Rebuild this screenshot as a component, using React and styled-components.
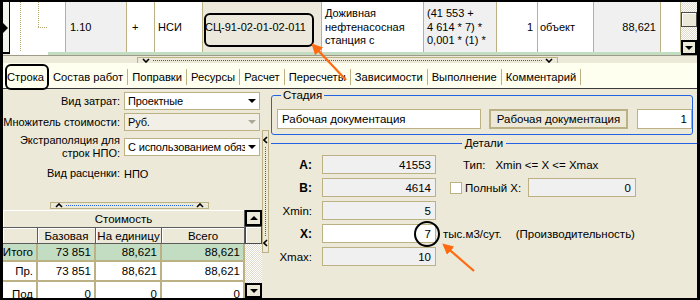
import React from "react";
import styled, { createGlobalStyle } from "styled-components";

const OLIVE = "#bcb185";
const BEIGE = "#ece9d8";
const BLUE = "#2462e4";
const ORANGE = "#ff6a10";
const GREEN = "#c2ddc2";

const GlobalStyle = createGlobalStyle`
  body { margin: 0; background: #fff; }
  * { box-sizing: border-box; }
`;

const Frame = styled.div`
  position: relative;
  width: 700px;
  height: 300px;
  border: 2px solid #000;
  border-left-width: 3px;
  border-right-width: 3px;
  background: ${BEIGE};
  font-family: "Liberation Sans", Arial, sans-serif;
  font-size: 11px;
  color: #000;
  display: flex;
  flex-direction: column;
  overflow: hidden;
`;

/* ---------- top grid ---------- */

const GridArea = styled.div`
  display: flex;
  height: 54px;
  border-bottom: 1px solid #9d9a8a;
`;

const GridRows = styled.div`
  flex: 1;
  display: flex;
  flex-direction: column;
`;

const Row = styled.div`
  display: grid;
  grid-template-columns: 7px 56px 61px 28px 48px 119px 102px 73px 41px 56px 67px 20px;
  height: 50px;
`;

const Cell = styled.div`
  display: flex;
  align-items: center;
  justify-content: ${p => (p.$right ? "flex-end" : "flex-start")};
  padding: 0 ${p => (p.$right ? 4 : 2)}px 0 ${p => (p.$pl ?? 3)}px;
  background: ${p => p.$bg || "#fff"};
  border-right: 1px solid ${OLIVE};
  border-bottom: 1px solid ${OLIVE};
  white-space: pre-line;
  line-height: 13.5px;
  overflow: hidden;
`;

const Indicator = styled.div`
  display: flex;
  align-items: center;
  background: #f3f3ee;
  border-right: 1px solid #000;
  border-bottom: 1px solid #000;
  &::after {
    content: "";
    border-left: 5px solid #000;
    border-top: 5px solid transparent;
    border-bottom: 5px solid transparent;
    margin-top: 1px;
  }
`;

const TreeCell = styled.div`
  background: #fff;
  border-right: 1px solid ${OLIVE};
  border-bottom: 1px solid ${OLIVE};
`;

const RowTail = styled.div`
  display: grid;
  grid-template-columns: 7px 38px 1fr;
  height: 3px;
  & > :nth-child(1) { background: #000; height: 1px; }
  & > :nth-child(2) { background: #fff; }
  & > :nth-child(3) { background: ${GREEN}; }
`;

const ScrollBar = styled.div`
  width: ${p => p.$w}px;
  display: flex;
  flex-direction: column;
  background-color: #f4f3ee;
  background-image: repeating-conic-gradient(#ffffff 0 25%, #dedbcc 0 50%);
  background-size: 2px 2px;
`;

const Thumb = styled.div`
  height: ${p => p.$h}px;
  margin-top: ${p => p.$mt || 0}px;
  background: ${BEIGE};
  border: 1px solid #4a4a4a;
  box-shadow: inset 1px 1px 0 #fff;
`;

const ScrollButton = styled.div`
  height: ${p => p.$h}px;
  margin-top: ${p => (p.$push ? "auto" : "0")};
  background: ${BEIGE};
  border: 2px solid #000;
  display: flex;
  align-items: center;
  justify-content: center;
  &::after {
    content: "";
    border-left: 4px solid transparent;
    border-right: 4px solid transparent;
    ${p => (p.$dir === "up" ? "border-bottom" : "border-top")}: 4px solid #000;
  }
`;

/* ---------- splitters ---------- */

const SplitZone = styled.div`
  height: 7px;
  padding-left: ${p => p.$pl}px;
  margin-top: ${p => p.$mt || 0}px;
  display: flex;
`;

const HSplit = styled.div`
  width: ${p => p.$w}px;
  height: 7px;
  margin-top: ${p => p.$mt || 0}px;
  border: 1px solid ${OLIVE};
  background: ${BEIGE};
  display: flex;
  align-items: center;
  gap: 3px;
  padding: 0 4px;
`;

const VSplit = styled.div`
  width: 7px;
  height: 123px;
  margin-top: 41px;
  border: 1px solid ${OLIVE};
  background: ${BEIGE};
  display: flex;
  flex-direction: column;
  align-items: center;
  gap: 3px;
  padding: 5px 0;
`;

const DotLine = styled.div`
  flex: 1;
  ${p => (p.$vertical ? "border-left" : "border-top")}: 1px dotted ${BLUE};
`;

const Chevron = ({ dir }) => {
  const vert = dir === "left";
  const w = vert ? 5 : 8;
  const h = vert ? 8 : 5;
  const pts = {
    down: "1,1 4,4 7,1",
    up: "1,4 4,1 7,4",
    left: "4,1 1,4 4,7",
  }[dir];
  return (
    <svg width={w} height={h} viewBox={`0 0 ${w} ${h}`} style={{ flex: "none" }}>
      <polyline points={pts} fill="none" stroke="#000" strokeWidth="1.6" />
    </svg>
  );
};

/* ---------- tabs ---------- */

const TabBar = styled.div`
  height: 26px;
  background: #fffff0;
  border-bottom: 1px solid #3a3a3a;
  display: flex;
  align-items: center;
  padding-top: 2px;
`;

const Tab = styled.div`
  padding: 0 4px;
  line-height: 16px;
  font-size: 11.2px;
  border-right: 1px solid ${OLIVE};
  white-space: nowrap;
`;

/* ---------- body ---------- */

const Body = styled.div`
  flex: 1;
  display: flex;
  min-height: 0;
`;

const LeftPanel = styled.div`
  width: 259px;
  display: flex;
  flex-direction: column;
  padding-top: 3px;
`;

const SplitColumn = styled.div`
  width: 8px;
  display: flex;
  justify-content: flex-start;
`;

const RightPanel = styled.div`
  flex: 1;
  padding-left: 1px;
  display: flex;
  flex-direction: column;
`;

const FormRow = styled.div`
  display: grid;
  grid-template-columns: 117px 136px;
  column-gap: 4px;
  align-items: center;
  height: ${p => p.$h}px;
  margin-top: ${p => p.$mt || 0}px;
`;

const FormLabel = styled.div`
  text-align: right;
  line-height: 13px;
`;

const Select = styled.div`
  height: 18px;
  border: 1px solid ${OLIVE};
  background: ${p => (p.$disabled ? "#f1efe6" : "#fff")};
  display: flex;
  align-items: center;
  padding-left: 3px;
  white-space: nowrap;
  overflow: hidden;
`;

const SelectText = styled.span`
  flex: 1;
  overflow: hidden;
  letter-spacing: -0.15px;
`;

const SelectArrow = styled.div`
  width: 14px;
  height: 100%;
  flex: none;
  display: flex;
  align-items: center;
  justify-content: center;
  &::after {
    content: "";
    border-left: 4px solid transparent;
    border-right: 4px solid transparent;
    border-top: 4px solid ${p => (p.$disabled ? "#aca899" : "#000")};
  }
`;

/* ---------- cost table ---------- */

const CostTable = styled.div`
  flex: 1;
  display: flex;
  margin-top: 1px;
  overflow: hidden;
`;

const TableGrid = styled.div`
  width: 242px;
  display: grid;
  grid-template-columns: 35px 58px 66px 83px;
  align-content: start;
`;

const HeadCell = styled.div`
  grid-column: span ${p => p.$span || 1};
  height: ${p => p.$h}px;
  display: flex;
  align-items: center;
  justify-content: center;
  background: ${BEIGE};
  border-right: 1px solid #5c5c5c;
  border-bottom: 1px solid #5c5c5c;
  box-shadow: inset 1px 1px 0 #fff;
  font-size: 11.5px;
`;

const TCell = styled.div`
  height: ${p => p.$h}px;
  display: flex;
  align-items: center;
  justify-content: flex-end;
  padding-right: 3px;
  padding-top: ${p => p.$pt || 0}px;
  background: ${p => p.$bg || "#fff"};
  border-right: 2px solid ${OLIVE};
  border-bottom: 2px solid ${OLIVE};
  font-size: 11.5px;
  white-space: nowrap;
  overflow: hidden;
`;

/* ---------- right panel ---------- */

const Fieldset = styled.fieldset`
  margin: 0 4px 0 0;
  padding: 8px 0 5px 5px;
  border: 1px solid ${BLUE};
  border-radius: 3px;
  min-width: 0;
`;

const Legend = styled.legend`
  padding: 0 2px;
  margin-left: 4px;
  line-height: 12px;
  font-size: 11.5px;
`;

const StageRow = styled.div`
  display: flex;
  gap: 8px;
`;

const TextBox = styled.div`
  width: ${p => p.$w}px;
  height: ${p => p.$h || 20}px;
  margin-left: ${p => p.$ml || 0}px;
  flex: none;
  border: ${p => (p.$thick ? 2 : 1)}px solid ${OLIVE};
  background: ${p => p.$bg || "#fff"};
  display: flex;
  align-items: center;
  justify-content: ${p => (p.$right ? "flex-end" : p.$center ? "center" : "flex-start")};
  padding: 0 4px;
  font-size: 11.5px;
  white-space: nowrap;
  overflow: hidden;
`;

const GroupLine = styled.div`
  display: flex;
  align-items: center;
  gap: 3px;
  height: 12px;
  margin-top: 2px;
  font-size: 11.5px;
  &::before, &::after {
    content: "";
    flex: 1;
    height: 1px;
    background: ${BLUE};
  }
`;

const DetailRow = styled.div`
  display: flex;
  align-items: center;
  height: 19px;
  margin-top: ${p => p.$mt}px;
  font-size: 11.5px;
`;

const DetailLabel = styled.div`
  width: 41px;
  text-align: right;
  font-weight: ${p => (p.$bold ? "bold" : "normal")};
  font-size: ${p => (p.$bold ? 12 : 11.5)}px;
`;

const Note = styled.span`
  margin-left: ${p => p.$ml}px;
  width: ${p => (p.$w ? `${p.$w}px` : "auto")};
  white-space: nowrap;
`;

const CheckBox = styled.span`
  width: 12px;
  height: 12px;
  margin-left: ${p => p.$ml}px;
  border: 1px solid ${OLIVE};
  background: #fff;
  flex: none;
`;

/* ---------- annotations ---------- */

const Overlay = styled.svg`
  position: absolute;
  left: -3px;
  top: -2px;
  pointer-events: none;
`;

const Annotations = () => (
  <Overlay width="700" height="300" viewBox="0 0 700 300">
    <defs>
      <marker id="head" markerWidth="5" markerHeight="5" refX="4" refY="2.5" orient="auto" markerUnits="strokeWidth">
        <polygon points="0,0 5,2.5 0,5" fill={ORANGE} />
      </marker>
    </defs>
    <rect x="205" y="14" width="108" height="32" rx="5" fill="none" stroke="#000" strokeWidth="2" />
    <rect x="6" y="65" width="42" height="24" rx="5" fill="none" stroke="#000" strokeWidth="2" />
    <circle cx="427" cy="234" r="12" fill="none" stroke="#000" strokeWidth="2" />
    <line x1="346" y1="80" x2="313" y2="45" stroke={ORANGE} strokeWidth="2.2" markerEnd="url(#head)" />
    <line x1="474" y1="271" x2="444" y2="245" stroke={ORANGE} strokeWidth="2.2" markerEnd="url(#head)" />
  </Overlay>
);

const TreeLines = () => (
  <svg width="55" height="49" viewBox="0 0 55 49">
    <g stroke="#b6ad74" strokeWidth="1" strokeDasharray="1 1" fill="none">
      <line x1="10.5" y1="0" x2="10.5" y2="49" />
      <line x1="28.5" y1="0" x2="28.5" y2="25" />
      <line x1="28" y1="25.5" x2="38" y2="25.5" />
    </g>
  </svg>
);

const costRows = [
  { name: "Итого", base: "73 851", unit: "88,621", total: "88,621", bg: GREEN, h: 18 },
  { name: "Пр.", base: "73 851", unit: "88,621", total: "88,621", h: 20 },
  { name: "Под", base: "0", unit: "0", total: "0", h: 20, pt: 6 },
];

const tabs = ["Строка", "Состав работ", "Поправки", "Ресурсы", "Расчет", "Пересчеты", "Зависимости", "Выполнение", "Комментарий"];

export default function App() {
  return (
    <>
      <GlobalStyle />
      <Frame>
        <GridArea>
          <GridRows>
            <Row>
              <Indicator />
              <TreeCell>
                <TreeLines />
              </TreeCell>
              <Cell $bg="#f0f0f0" $pl={4}>1.10</Cell>
              <Cell $pl={5}>+</Cell>
              <Cell>НСИ</Cell>
              <Cell $bg="#ece9dc" $pl={2}>СЦ-91-02-01-02-011</Cell>
              <Cell>{"Доживная\nнефтенасосная\nстанция с"}</Cell>
              <Cell $bg="#f0f0f0">{"(41 553 +\n4 614 * 7) *\n0,001 * (1) *"}</Cell>
              <Cell $right>1</Cell>
              <Cell $pl={2}>объект</Cell>
              <Cell $bg="#f0f0f0" $right>88,621</Cell>
              <Cell />
            </Row>
            <RowTail>
              <span />
              <span />
              <span />
            </RowTail>
          </GridRows>
          <ScrollBar $w={16}>
            <Thumb $h={15} $mt={10} />
            <ScrollButton $h={15} $push $dir="down" />
          </ScrollBar>
        </GridArea>

        <SplitZone $pl={134}>
          <HSplit $w={421} $mt={1}>
            <Chevron dir="down" />
            <DotLine />
            <Chevron dir="down" />
          </HSplit>
        </SplitZone>

        <TabBar>
          {tabs.map(t => (
            <Tab key={t}>{t}</Tab>
          ))}
        </TabBar>

        <Body>
          <LeftPanel>
            <FormRow $h={18}>
              <FormLabel>Вид затрат:</FormLabel>
              <Select>
                <SelectText>Проектные</SelectText>
                <SelectArrow />
              </Select>
            </FormRow>
            <FormRow $h={18} $mt={3}>
              <FormLabel>Множитель стоимости:</FormLabel>
              <Select $disabled>
                <SelectText>Руб.</SelectText>
                <SelectArrow $disabled />
              </Select>
            </FormRow>
            <FormRow $h={26} $mt={3}>
              <FormLabel>
                Экстраполяция для
                <br />
                строк НПО:
              </FormLabel>
              <Select>
                <SelectText>С использованием обяз</SelectText>
                <SelectArrow />
              </Select>
            </FormRow>
            <FormRow $h={15} $mt={6}>
              <FormLabel>Вид расценки:</FormLabel>
              <span>НПО</span>
            </FormRow>

            <SplitZone $pl={47} $mt={21}>
              <HSplit $w={159}>
                <Chevron dir="up" />
                <DotLine />
                <Chevron dir="up" />
              </HSplit>
            </SplitZone>

            <CostTable>
              <TableGrid>
                <HeadCell $span={4} $h={18}>Стоимость</HeadCell>
                <HeadCell $h={16} />
                <HeadCell $h={16}>Базовая</HeadCell>
                <HeadCell $h={16}>На единицу</HeadCell>
                <HeadCell $h={16}>Всего</HeadCell>
                {costRows.map(r => (
                  <React.Fragment key={r.name}>
                    <TCell $h={r.h} $bg={r.bg} $pt={r.pt}>{r.name}</TCell>
                    <TCell $h={r.h} $bg={r.bg} $pt={r.pt}>{r.base}</TCell>
                    <TCell $h={r.h} $bg={r.bg} $pt={r.pt}>{r.unit}</TCell>
                    <TCell $h={r.h} $bg={r.bg} $pt={r.pt}>{r.total}</TCell>
                  </React.Fragment>
                ))}
              </TableGrid>
              <ScrollBar $w={17}>
                <ScrollButton $h={16} $dir="up" />
                <Thumb $h={18} />
                <ScrollButton $h={15} $push $dir="down" />
              </ScrollBar>
            </CostTable>
          </LeftPanel>

          <SplitColumn>
            <VSplit>
              <Chevron dir="left" />
              <DotLine $vertical />
              <Chevron dir="left" />
            </VSplit>
          </SplitColumn>

          <RightPanel>
            <Fieldset>
              <Legend>Стадия</Legend>
              <StageRow>
                <TextBox $w={204}>Рабочая документация</TextBox>
                <TextBox $w={139} $bg={BEIGE} $thick $center>Рабочая документация</TextBox>
                <TextBox $w={55} $ml={1} $right>1</TextBox>
              </StageRow>
            </Fieldset>

            <GroupLine>Детали</GroupLine>

            <DetailRow $mt={6}>
              <DetailLabel $bold>А:</DetailLabel>
              <TextBox $w={114} $h={19} $ml={10} $bg="#f0f0f0" $right>41553</TextBox>
              <Note $ml={27}>Тип:</Note>
              <Note $ml={10}>Xmin &lt;= X &lt;= Xmax</Note>
            </DetailRow>
            <DetailRow $mt={4}>
              <DetailLabel $bold>В:</DetailLabel>
              <TextBox $w={114} $h={19} $ml={10} $bg="#f0f0f0" $right>4614</TextBox>
              <CheckBox $ml={14} />
              <Note $ml={3} $w={63}>Полный X:</Note>
              <TextBox $w={108} $h={19} $bg="#f0f0f0" $right>0</TextBox>
            </DetailRow>
            <DetailRow $mt={4}>
              <DetailLabel>Xmin:</DetailLabel>
              <TextBox $w={114} $h={19} $ml={10} $bg="#f0f0f0" $right>5</TextBox>
            </DetailRow>
            <DetailRow $mt={4}>
              <DetailLabel $bold>X:</DetailLabel>
              <TextBox $w={114} $h={19} $ml={10} $right>7</TextBox>
              <Note $ml={7}>тыс.м3/сут.</Note>
              <Note $ml={14}>(Производительность)</Note>
            </DetailRow>
            <DetailRow $mt={4}>
              <DetailLabel>Xmax:</DetailLabel>
              <TextBox $w={114} $h={19} $ml={10} $bg="#f0f0f0" $right>10</TextBox>
            </DetailRow>
          </RightPanel>
        </Body>
        <Annotations />
      </Frame>
    </>
  );
}
